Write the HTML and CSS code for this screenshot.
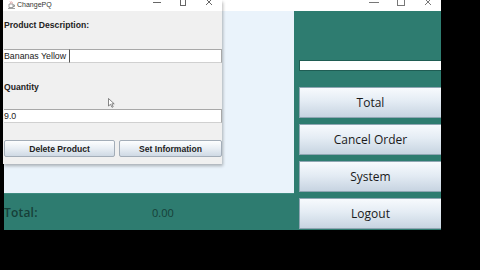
FILE: index.html
```html
<!DOCTYPE html>
<html lang="en">
<head>
  <meta charset="UTF-8">
  <title>ChangePQ</title>
  <link rel="stylesheet" href="styles.css">
</head>
<body>
  <div class="screen">

    <!-- Main POS window (behind) -->
    <div class="main-window">
      <div class="titlebar main-title">
        <span class="ctrl"><svg width="10" height="8" viewBox="0 0 10 8"><line x1="0" y1="3.5" x2="10" y2="3.5" stroke="#777" stroke-width="1"/></svg></span>
        <span class="ctrl"><svg width="8" height="8" viewBox="0 0 8 8"><rect x="0.5" y="0.5" width="7" height="6" fill="none" stroke="#777" stroke-width="1"/></svg></span>
        <span class="ctrl"><svg width="8" height="8" viewBox="0 0 8 8"><path d="M1 0 L7 6 M7 0 L1 6" stroke="#777" stroke-width="1"/></svg></span>
      </div>
      <div class="main-body">
        <div class="left-col">
          <div class="canvas-area"></div>
          <div class="total-bar">
            <span class="total-label">Total:</span>
            <span class="total-value">0.00</span>
          </div>
        </div>
        <div class="side-panel">
          <div class="side-field"></div>
          <button class="side-btn">Total</button>
          <button class="side-btn">Cancel Order</button>
          <button class="side-btn">System</button>
          <button class="side-btn">Logout</button>
        </div>
      </div>
    </div>

    <!-- ChangePQ dialog (on top) -->
    <div class="dialog">
      <div class="titlebar dialog-title">
        <span class="app-icon"><svg width="7" height="8" viewBox="0 0 7 8"><path d="M1 3 H5 V6.5 H1 Z M5 4 H6.5 V5.5 H5" fill="none" stroke="#888" stroke-width="0.8"/><path d="M2 0.5 Q3 1.5 2.5 2.5 M3.5 0.5 Q4.5 1.5 4 2.5" fill="none" stroke="#c66" stroke-width="0.6"/><line x1="0" y1="7.5" x2="7" y2="7.5" stroke="#888" stroke-width="0.8"/></svg></span>
        <span class="dialog-name">ChangePQ</span>
        <span class="spacer"></span>
        <span class="ctrl small"><svg width="8" height="8" viewBox="0 0 8 8"><line x1="0" y1="3.5" x2="8" y2="3.5" stroke="#666" stroke-width="1"/></svg></span>
        <span class="ctrl small"><svg width="8" height="8" viewBox="0 0 8 8"><rect x="1.5" y="0.5" width="5" height="6" fill="none" stroke="#666" stroke-width="1"/></svg></span>
        <span class="ctrl small"><svg width="8" height="8" viewBox="0 0 8 8"><path d="M1 0 L7 6 M7 0 L1 6" stroke="#666" stroke-width="1"/></svg></span>
      </div>
      <div class="dialog-body">
        <p class="field-label first">Product Description:</p>
        <div class="field-row">
          <div class="field name-field">Bananas Yellow</div>
          <div class="field extra-field"></div>
        </div>
        <p class="field-label">Quantity</p>
        <div class="field qty-field">9.0</div>
        <div class="dialog-buttons">
          <button class="dlg-btn delete">Delete Product</button>
          <button class="dlg-btn set">Set Information</button>
        </div>
      </div>
      <svg class="pointer" width="7" height="10" viewBox="0 0 7 10"><path d="M0.5 0.5 V8 L2.5 6.3 L4 9.3 L5.2 8.7 L3.8 5.8 H6.2 Z" fill="#fff" stroke="#555" stroke-width="0.7"/></svg>
    </div>

  </div>
</body>
</html>
```

FILE: styles.css
```css
body {
  margin: 0;
  padding: 0;
  background: #000;
  font-family: 'Liberation Sans', Arial, sans-serif;
}

.screen {
  position: relative;
  width: 480px;
  height: 270px;
  background: #000;
  overflow: hidden;
}

/* ---------- title bars ---------- */

.titlebar {
  height: 11px;
  background: #fff;
  display: flex;
  align-items: flex-start;
}

.ctrl {
  width: 27px;
  height: 8px;
  display: flex;
  justify-content: center;
  margin-top: -1px;
}

.ctrl.small {
  width: 26px;
}

.main-title {
  justify-content: flex-end;
}

/* ---------- main window ---------- */

.main-window {
  margin-left: 4px;
  width: 437px;
  height: 230px;
  display: flex;
  flex-direction: column;
}

.main-body {
  flex: 1;
  display: flex;
}

.left-col {
  width: 290px;
  display: flex;
  flex-direction: column;
}

.canvas-area {
  flex: 1;
  background: #eaf3fb;
}

.total-bar {
  height: 37px;
  background: #2e7c70;
  border-top: 1px solid #3f8b80;
  box-sizing: border-box;
  display: flex;
  align-items: center;
  font-family: 'Open Sans', sans-serif;
  font-size: 12px;
  color: #163f38;
}

.total-label {
  width: 148px;
  font-weight: 600;
  letter-spacing: 0.2px;
}

.total-value {
  font-size: 11px;
}

.side-panel {
  flex: 1;
  background: #2e7c70;
  padding: 49px 0 0 5px;
  display: flex;
  flex-direction: column;
  gap: 6px;
}

.side-field {
  height: 11px;
  background: #fff;
  border: 1px solid #1f5d54;
  border-right: none;
  box-sizing: border-box;
  margin-bottom: 10px;
}

.side-btn {
  height: 31px;
  border: 1px solid #8fa6b3;
  border-right: none;
  background: linear-gradient(#f7fafd, #e4ecf4 45%, #c7d4e1);
  font-family: 'Open Sans', sans-serif;
  font-size: 12px;
  color: #1a1a1a;
  padding: 0;
}

/* ---------- dialog ---------- */

.dialog {
  position: absolute;
  left: 3px;
  top: 0;
  width: 219px;
  height: 164px;
  background: #f0f0f0;
  box-shadow: 1px 2px 3px rgba(0, 0, 0, 0.28);
  display: flex;
  flex-direction: column;
}

.dialog-title {
  align-items: center;
  height: 11px;
}

.app-icon {
  margin-left: 5px;
  margin-top: -2px;
  display: flex;
}

.dialog-name {
  margin-left: 2px;
  margin-top: -2px;
  font-size: 7px;
  color: #333;
}

.spacer {
  flex: 1;
}

.dialog-title .ctrl {
  align-self: flex-start;
}

.dialog-body {
  padding: 0 0 0 1px;
}

.field-label {
  margin: 19px 0 0 0;
  height: 11px;
  line-height: 11px;
  font-size: 8.6px;
  font-weight: bold;
  color: #222;
}

.field-label.first {
  margin-top: 9px;
}

.field-row {
  display: flex;
  margin-top: 18px;
}

.field {
  height: 14px;
  line-height: 12px;
  background: #fff;
  border-top: 1px solid #a8a8a8;
  border-bottom: 1px solid #d0d0d0;
  box-sizing: border-box;
  font-size: 8.8px;
  color: #222;
}

.name-field {
  width: 65px;
}

.extra-field {
  flex: 1;
  border-left: 1px solid #555;
  border-right: 1px solid #a8a8a8;
}

.qty-field {
  margin-top: 16px;
  border-right: 1px solid #a8a8a8;
}

.dialog-buttons {
  display: flex;
  gap: 4px;
  margin-top: 17px;
}

.dlg-btn {
  height: 17px;
  padding: 0;
  border: 1px solid #a3adb8;
  border-radius: 2px;
  background: linear-gradient(#fdfeff, #e8eef4 50%, #cfd9e4);
  font-family: 'Liberation Sans', Arial, sans-serif;
  font-size: 8.6px;
  font-weight: bold;
  color: #222;
}

.dlg-btn.delete {
  width: 111px;
}

.dlg-btn.set {
  flex: 1;
}

.pointer {
  position: absolute;
  left: 105px;
  top: 98px;
}
```
